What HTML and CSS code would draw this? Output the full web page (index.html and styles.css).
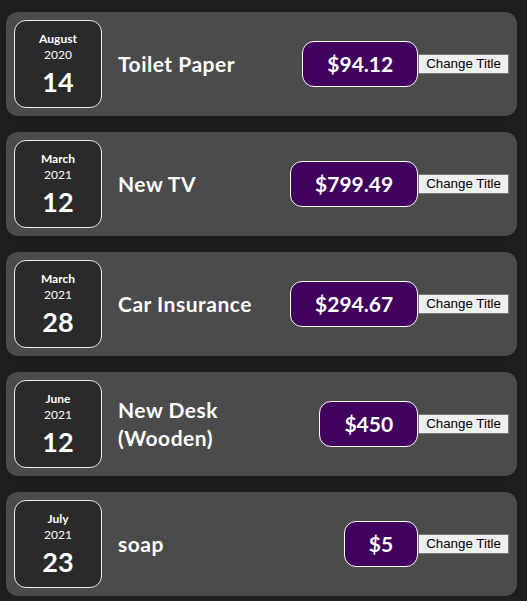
FILE: index.html
```html
<!DOCTYPE html>
<html>
<head>
<meta charset="utf-8">
<link rel="stylesheet" href="styles.css">
</head>
<body>
<div class="expenses">
  <div class="expense-item">
    <div class="expense-date">
      <div class="expense-date__month">August</div>
      <div class="expense-date__year">2020</div>
      <div class="expense-date__day">14</div>
    </div>
    <div class="expense-item__description">
      <h2>Toilet Paper</h2>
      <div class="expense-item__price">$94.12</div>
    </div>
    <button class="change-btn">Change Title</button>
  </div>
  <div class="expense-item">
    <div class="expense-date">
      <div class="expense-date__month">March</div>
      <div class="expense-date__year">2021</div>
      <div class="expense-date__day">12</div>
    </div>
    <div class="expense-item__description">
      <h2>New TV</h2>
      <div class="expense-item__price">$799.49</div>
    </div>
    <button class="change-btn">Change Title</button>
  </div>
  <div class="expense-item">
    <div class="expense-date">
      <div class="expense-date__month">March</div>
      <div class="expense-date__year">2021</div>
      <div class="expense-date__day">28</div>
    </div>
    <div class="expense-item__description">
      <h2>Car Insurance</h2>
      <div class="expense-item__price">$294.67</div>
    </div>
    <button class="change-btn">Change Title</button>
  </div>
  <div class="expense-item">
    <div class="expense-date">
      <div class="expense-date__month">June</div>
      <div class="expense-date__year">2021</div>
      <div class="expense-date__day">12</div>
    </div>
    <div class="expense-item__description">
      <h2>New Desk (Wooden)</h2>
      <div class="expense-item__price">$450</div>
    </div>
    <button class="change-btn">Change Title</button>
  </div>
  <div class="expense-item">
    <div class="expense-date">
      <div class="expense-date__month">July</div>
      <div class="expense-date__year">2021</div>
      <div class="expense-date__day">23</div>
    </div>
    <div class="expense-item__description">
      <h2>soap</h2>
      <div class="expense-item__price">$5</div>
    </div>
    <button class="change-btn">Change Title</button>
  </div>
</div>
</body>
</html>
```

FILE: styles.css
```css
html, body {
  margin: 0;
  background: #1f1f1f;
  font-family: Lato, "Noto Sans", sans-serif;
}
.expenses {
  padding: 12px 10px 0 6px;
  display: flex;
  flex-direction: column;
  gap: 16px;
}
.expense-item {
  display: flex;
  align-items: center;
  padding: 8px;
  border-radius: 12px;
  background: #4b4b4b;
  box-shadow: 0 2px 8px rgba(0,0,0,0.25);
}
.expense-date {
  display: flex;
  flex-direction: column;
  align-items: center;
  justify-content: center;
  width: 88px;
  height: 88px;
  box-sizing: border-box;
  border: 1px solid #ececec;
  background: #2a2a2a;
  color: #fff;
  border-radius: 12px;
  flex-shrink: 0;
}
.expense-date__month {
  font-size: 12px;
  font-weight: bold;
  line-height: 16px;
}
.expense-date__year {
  font-size: 12px;
  line-height: 16px;
}
.expense-date__day {
  font-size: 27px;
  font-weight: bold;
  line-height: 30px;
  margin-top: 4px;
}
.expense-item__description {
  flex: 1;
  display: flex;
  align-items: center;
  min-width: 0;
}
.expense-item h2 {
  flex: 1;
  margin: 0 16px;
  color: #fff;
  font-size: 21px;
  letter-spacing: 0.5px;
  line-height: 28px;
  font-weight: bold;
}
.expense-item__price {
  font-size: 21px;
  line-height: 28px;
  font-weight: bold;
  color: #fff;
  background: #40005d;
  border: 1px solid #fff;
  padding: 8px 24px;
  border-radius: 12px;
}
.change-btn {
  font-family: "Liberation Sans", Arial, sans-serif;
  font-size: 13.33px;
  padding: 1px 7px;
  margin: 0;
  background: #efefef;
  border: 1px solid #767676;
  color: #000;
  border-radius: 0;
  height: 20px;
  line-height: 16px;
}
```
